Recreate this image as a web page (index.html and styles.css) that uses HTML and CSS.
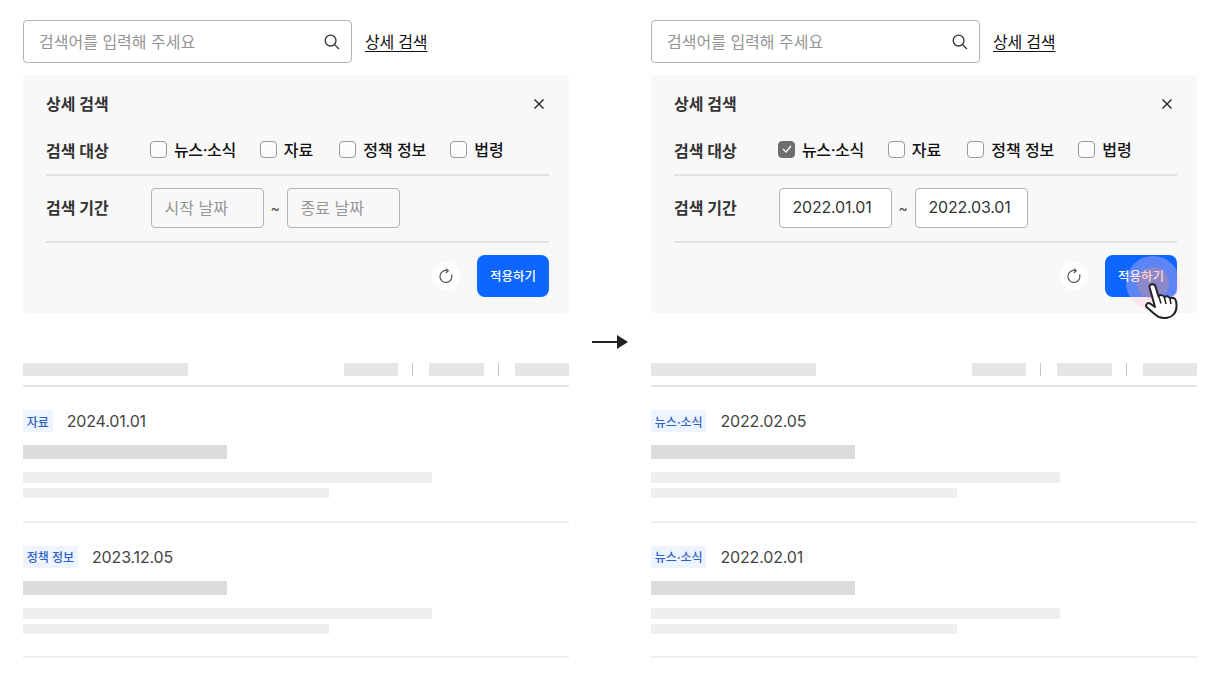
FILE: index.html
```html
<!DOCTYPE html>
<html lang="ko">
<head>
<meta charset="utf-8">
<title>상세 검색</title>
<link rel="stylesheet" href="styles.css">
</head>
<body>
<main class="stage">
  <section class="col">
    <div class="search-row">
      <div class="search-box"><span class="ph">검색어를 입력해 주세요</span>
        <svg class="ic-search" width="18" height="18" viewBox="0 0 18 18"><circle cx="7.6" cy="7.6" r="5.4" fill="none" stroke="#333" stroke-width="1.3"/><path d="M11.6 11.6 16 16" stroke="#333" stroke-width="1.3" fill="none"/></svg>
      </div>
      <a class="adv-link">상세 검색</a>
    </div>
    <div class="panel">
      <div class="panel-head"><h2>상세 검색</h2>
        <svg class="ic-x" width="12" height="12" viewBox="0 0 12 12"><path d="M1.5 1.5 10.500 10.500M10.500 1.500 1.500 10.500" stroke="#222" stroke-width="1.400" fill="none"/></svg>
      </div>
      <div class="row row-target"><span class="row-label">검색 대상</span>
        <div class="checks">
          <label class="chk"><i class="box"></i>뉴스·소식</label>
          <label class="chk"><i class="box"></i>자료</label>
          <label class="chk"><i class="box"></i>정책 정보</label>
          <label class="chk"><i class="box"></i>법령</label>
        </div>
      </div>
      <div class="row row-date"><span class="row-label">검색 기간</span>
        <div class="dates"><span class="date ph">시작 날짜</span><span class="tilde">~</span><span class="date ph">종료 날짜</span></div>
      </div>
      <div class="actions">
        <span class="refresh"><svg width="16" height="16" viewBox="0 0 16 16"><path d="M9.600 2.700A6 6 0 1 0 13.600 6.500" fill="none" stroke="#555" stroke-width="1.200"/><path d="M7.800 .6 10.300 2.800 7.800 5" fill="none" stroke="#555" stroke-width="1.200"/></svg></span>
        <span class="apply">적용하기</span>
      </div>
    </div>
    <div class="list-head"><i class="sk sk-title"></i>
      <div class="sorts"><i class="sk sk-sort"></i><b class="sep"></b><i class="sk sk-sort"></i><b class="sep"></b><i class="sk sk-sort"></i></div>
    </div>
    <article class="item">
      <div class="meta"><span class="tag">자료</span><span class="when">2024.01.01</span></div>
      <i class="sk sk-head"></i><i class="sk sk-line1"></i><i class="sk sk-line2"></i>
    </article>
    <article class="item">
      <div class="meta"><span class="tag">정책 정보</span><span class="when">2023.12.05</span></div>
      <i class="sk sk-head"></i><i class="sk sk-line1"></i><i class="sk sk-line2"></i>
    </article>
  </section>

  <div class="arrow"><svg width="36" height="16" viewBox="0 0 36 16"><path d="M0 8H26" stroke="#222" stroke-width="2"/><path d="M25 1 36 8 25 15Z" fill="#222"/></svg></div>

  <section class="col">
    <div class="search-row">
      <div class="search-box"><span class="ph">검색어를 입력해 주세요</span>
        <svg class="ic-search" width="18" height="18" viewBox="0 0 18 18"><circle cx="7.6" cy="7.6" r="5.4" fill="none" stroke="#333" stroke-width="1.3"/><path d="M11.6 11.6 16 16" stroke="#333" stroke-width="1.3" fill="none"/></svg>
      </div>
      <a class="adv-link">상세 검색</a>
    </div>
    <div class="panel">
      <div class="panel-head"><h2>상세 검색</h2>
        <svg class="ic-x" width="12" height="12" viewBox="0 0 12 12"><path d="M1.5 1.5 10.500 10.500M10.500 1.500 1.500 10.500" stroke="#222" stroke-width="1.400" fill="none"/></svg>
      </div>
      <div class="row row-target"><span class="row-label">검색 대상</span>
        <div class="checks">
          <label class="chk"><i class="box on"><svg width="12" height="10" viewBox="0 0 12 10"><path d="M2 5 5 8 10 2" fill="none" stroke="#fff" stroke-width="1.300"/></svg></i>뉴스·소식</label>
          <label class="chk"><i class="box"></i>자료</label>
          <label class="chk"><i class="box"></i>정책 정보</label>
          <label class="chk"><i class="box"></i>법령</label>
        </div>
      </div>
      <div class="row row-date"><span class="row-label">검색 기간</span>
        <div class="dates"><span class="date">2022.01.01</span><span class="tilde">~</span><span class="date">2022.03.01</span></div>
      </div>
      <div class="actions">
        <span class="refresh"><svg width="16" height="16" viewBox="0 0 16 16"><path d="M9.600 2.700A6 6 0 1 0 13.600 6.500" fill="none" stroke="#555" stroke-width="1.200"/><path d="M7.800 .6 10.300 2.800 7.800 5" fill="none" stroke="#555" stroke-width="1.200"/></svg></span>
        <span class="apply">적용하기</span>
      </div>
      <div class="touch">
        <i class="ring"></i><i class="ring-in"></i>
        <svg class="hand" width="34" height="37" viewBox="0 0 34 37"><path d="M4.500 4C4 1 9.500 0 10.500 3.500L13.500 13.500C14.500 11.500 18.500 11.500 19.500 14.500 20.500 12.500 24 12.800 25 15.500 26.500 14 30.500 15 31 18 32 23 31.500 28 29 31 26 35 19 36 14 34 9.500 32 6.500 28 2 24.500 0 22.500 2 19 5 20.500L10 24Z" fill="#fff" stroke="#222" stroke-width="2" stroke-linejoin="round"/><path d="M14 14 16 20.500M19.500 15 21 21M25 16 26 21" stroke="#222" stroke-width="1.500" fill="none"/></svg>
      </div>
    </div>
    <div class="list-head"><i class="sk sk-title"></i>
      <div class="sorts"><i class="sk sk-sort"></i><b class="sep"></b><i class="sk sk-sort"></i><b class="sep"></b><i class="sk sk-sort"></i></div>
    </div>
    <article class="item">
      <div class="meta"><span class="tag">뉴스·소식</span><span class="when">2022.02.05</span></div>
      <i class="sk sk-head"></i><i class="sk sk-line1"></i><i class="sk sk-line2"></i>
    </article>
    <article class="item">
      <div class="meta"><span class="tag">뉴스·소식</span><span class="when">2022.02.01</span></div>
      <i class="sk sk-head"></i><i class="sk sk-line1"></i><i class="sk sk-line2"></i>
    </article>
  </section>
</main>
</body>
</html>
```
FILE: styles.css
```css
* { box-sizing: border-box; }
html, body { margin: 0; height: 100%; background: #fff; overflow: hidden; }
body { font-family: Inter, "Noto Sans CJK KR", sans-serif; color: #222; }
i { display: block; font-style: normal; }

.stage { display: flex; padding: 20px 0 0 23px; }
.col { width: 546px; flex: none; }
.arrow { width: 82px; flex: none; display: flex; justify-content: center; padding-top: 314px; height: 330px; }
.arrow svg { display: block; }

.search-row { display: flex; align-items: center; gap: 13px; height: 43px; }
.search-box { width: 329px; height: 43px; border: 1px solid #b4b4b4; border-radius: 4px; display: flex; align-items: center; justify-content: space-between; padding: 0 10px 0 15px; background: #fff; }
.search-box .ph { padding-bottom: 2px; }
.ph { color: #949494; font-size: 16px; }
.ic-search { display: block; }
.adv-link { font-size: 16px; font-weight: 400; color: #111; text-decoration: underline; text-underline-offset: 3px; letter-spacing: -.2px; padding-bottom: 2px; }

.panel { position: relative; margin-top: 12px; height: 238px; background: #f8f8f8; border-radius: 4px; padding: 0 20px 0 23px; }
.panel-head { height: 57px; display: flex; align-items: center; justify-content: space-between; }
.panel-head h2 { margin: 0 0 1px; font-size: 16px; font-weight: 700; color: #333; }
.ic-x { display: block; margin: 1px 4px 0 0; }

.row { display: flex; align-items: center; border-bottom: 2px solid #e2e2e2; }
.row-label { width: 105px; flex: none; font-size: 16px; font-weight: 700; color: #333; }
.row-target { height: 44px; padding-bottom: 6px; }
.row-date { height: 67px; padding-bottom: 2px; }
.row-date .row-label { padding-bottom: 2px; }
.checks { display: flex; gap: 24px; margin: 0 0 2px -1px; }
.chk { display: flex; align-items: center; gap: 7px; font-size: 16px; font-weight: 500; color: #111; }
.chk:first-child { letter-spacing: -.4px; }
.chk:nth-child(2) { padding-right: 2px; }
.box { width: 17px; height: 17px; border: 1px solid #999; border-radius: 4px; background: #fcfcfc; display: flex; align-items: center; justify-content: center; }
.box.on { background: #6e6e6e; border-color: #6e6e6e; }

.dates { display: flex; align-items: center; }
.date { width: 112.500px; height: 40px; padding: 0 0 1px 12.500px; border: 1px solid #b4b4b4; border-radius: 4px; background: #fff; display: flex; align-items: center; font-size: 16px; color: #333; letter-spacing: -.2px; }
.date.ph { color: #949494; background: none; letter-spacing: 0; }
.tilde { width: 23.500px; text-align: center; font-size: 14px; color: #444; }

.actions { display: flex; justify-content: flex-end; align-items: center; gap: 17px; margin-top: 12px; }
.refresh { width: 28px; height: 28px; border-radius: 50%; background: #fff; display: flex; align-items: center; justify-content: center; }
.refresh svg { display: block; }
.apply { width: 72px; height: 42px; padding-bottom: 1px; border-radius: 8px; background: #0d66ff; color: #fff; font-size: 12.500px; font-weight: 500; display: flex; align-items: center; justify-content: center; }

.touch { position: absolute; left: 475px; top: 181px; width: 60px; height: 70px; }
.ring { position: absolute; left: 0; top: 0; width: 54px; height: 54px; border-radius: 50%; background: rgba(255, 195, 225, .33); }
.ring-in { position: absolute; left: 11px; top: 11px; width: 32px; height: 32px; border-radius: 50%; background: rgba(250, 147, 98, .3); }
.hand { position: absolute; left: 19px; top: 27px; }

.list-head { margin-top: 50px; height: 24px; border-bottom: 2px solid #e4e4e4; display: flex; justify-content: space-between; align-items: flex-start; }
.sk { background: #e6e6e6; }
.sk-title { width: 165px; height: 13px; }
.sorts { display: flex; align-items: flex-start; }
.sk-sort { width: 54.500px; height: 13px; }
.sep { display: block; width: 1px; height: 13px; margin: 0 16px 0 14px; background: #c4c4c4; }

.item { height: 135.500px; border-bottom: 2px solid #eee; padding-top: 23px; }
.meta { display: flex; align-items: center; gap: 14px; height: 22px; }
.tag { height: 22px; padding: 0 3.800px; background: #edf4ff; color: #2d62c4; font-size: 12px; display: flex; align-items: center; font-weight: 500; }
.when { font-size: 16px; color: #444; letter-spacing: -.15px; }
.sk-head { width: 204px; height: 14px; margin-top: 13px; background: #dcdcdc; }
.sk-line1 { width: 409px; height: 11px; margin-top: 13px; background: #efefef; }
.sk-line2 { width: 306px; height: 10px; margin-top: 5px; background: #efefef; }
```
